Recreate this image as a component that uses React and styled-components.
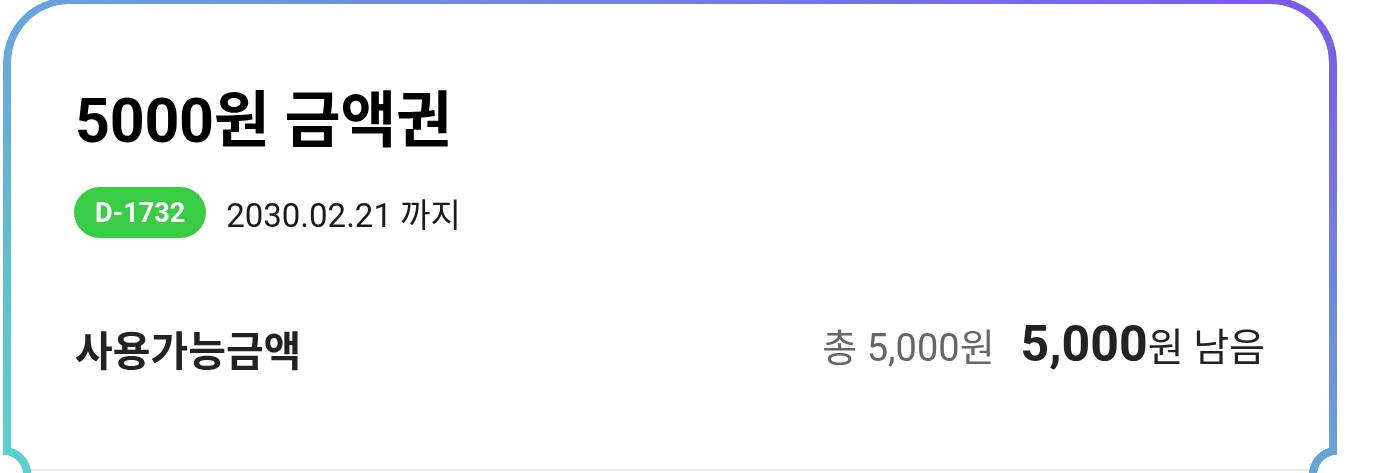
import React from 'react'
import styled, { createGlobalStyle } from 'styled-components'

const GlobalStyle = createGlobalStyle`
  html, body {
    margin: 0;
    padding: 0;
    background: #fff;
    overflow: hidden;
  }
  body {
    font-family: Roboto, "Noto Sans CJK KR", sans-serif;
  }
`

// gradient frame, notches cut out at the bottom corners
const Ticket = styled.div`
  margin: -3px 37px 0 3px;
  height: 476px;
  padding: 7px 8px 0;
  box-sizing: border-box;
  border-radius: 66px 66px 0 0;
  background: linear-gradient(to top right, #58d4cb 0%, #67a5db 50%, #7d57e9 100%);
  -webkit-mask:
    radial-gradient(circle at 0 calc(100% + 2px), transparent 20px, #000 20.5px) left / 51% 100% no-repeat,
    radial-gradient(circle at 100% calc(100% + 2px), transparent 20px, #000 20.5px) right / 51% 100% no-repeat;
  mask:
    radial-gradient(circle at 0 calc(100% + 2px), transparent 20px, #000 20.5px) left / 51% 100% no-repeat,
    radial-gradient(circle at 100% calc(100% + 2px), transparent 20px, #000 20.5px) right / 51% 100% no-repeat;
`

const Body = styled.div`
  height: 100%;
  display: flex;
  flex-direction: column;
  background: #fff;
  border-radius: 58px 58px 0 0;
  padding: 87px 64px 0;
  box-sizing: border-box;
  -webkit-mask:
    radial-gradient(circle at -8px calc(100% + 2px), transparent 28px, #000 28.5px) left / 51% 100% no-repeat,
    radial-gradient(circle at calc(100% + 8px) calc(100% + 2px), transparent 28px, #000 28.5px) right / 51% 100% no-repeat;
  mask:
    radial-gradient(circle at -8px calc(100% + 2px), transparent 28px, #000 28.5px) left / 51% 100% no-repeat,
    radial-gradient(circle at calc(100% + 8px) calc(100% + 2px), transparent 28px, #000 28.5px) right / 51% 100% no-repeat;
`

const Title = styled.h1`
  margin: 0;
  font-size: 61px;
  line-height: 61px;
  font-weight: 700;
  color: #000;
  letter-spacing: -0.3px;
`

const ExpireRow = styled.div`
  display: flex;
  align-items: center;
  margin-top: 35px;
  margin-left: -1px;
`

const DayBadge = styled.span`
  display: inline-flex;
  align-items: center;
  height: 51px;
  padding: 0 21px;
  border-radius: 26px;
  background: #38cd45;
  color: #fff;
  font-size: 27px;
  font-weight: 700;
`

const ExpireDate = styled.span`
  margin-left: 20px;
  font-size: 33px;
  color: #1a1a1a;
`

const BalanceRow = styled.div`
  display: flex;
  align-items: center;
  justify-content: space-between;
  margin-top: 80px;
  height: 56px;
`

const Label = styled.span`
  padding-top: 12px;
  font-size: 41px;
  line-height: 56px;
  font-weight: 700;
  color: #222;
`

const Amounts = styled.div`
  display: flex;
  align-items: baseline;
  line-height: 56px;
`

const Total = styled.span`
  font-size: 38px;
  color: #666;
  margin-right: 26px;
`

const Remain = styled.span`
  font-size: ${p => (p.strong ? '50px' : '39px')};
  font-weight: ${p => (p.strong ? 700 : 400)};
  color: #222;
`

const Divider = styled.div`
  margin: auto -64px 2px;
  height: 2px;
  background: #ebebeb;
`

export default function App() {
  return (
    <>
      <GlobalStyle />
      <Ticket>
        <Body>
          <Title>5000원 금액권</Title>
          <ExpireRow>
            <DayBadge>D-1732</DayBadge>
            <ExpireDate>2030.02.21 까지</ExpireDate>
          </ExpireRow>
          <BalanceRow>
            <Label>사용가능금액</Label>
            <Amounts>
              <Total>총 5,000원</Total>
              <Remain strong>5,000</Remain>
              <Remain>원 남음</Remain>
            </Amounts>
          </BalanceRow>
          <Divider />
        </Body>
      </Ticket>
    </>
  )
}
